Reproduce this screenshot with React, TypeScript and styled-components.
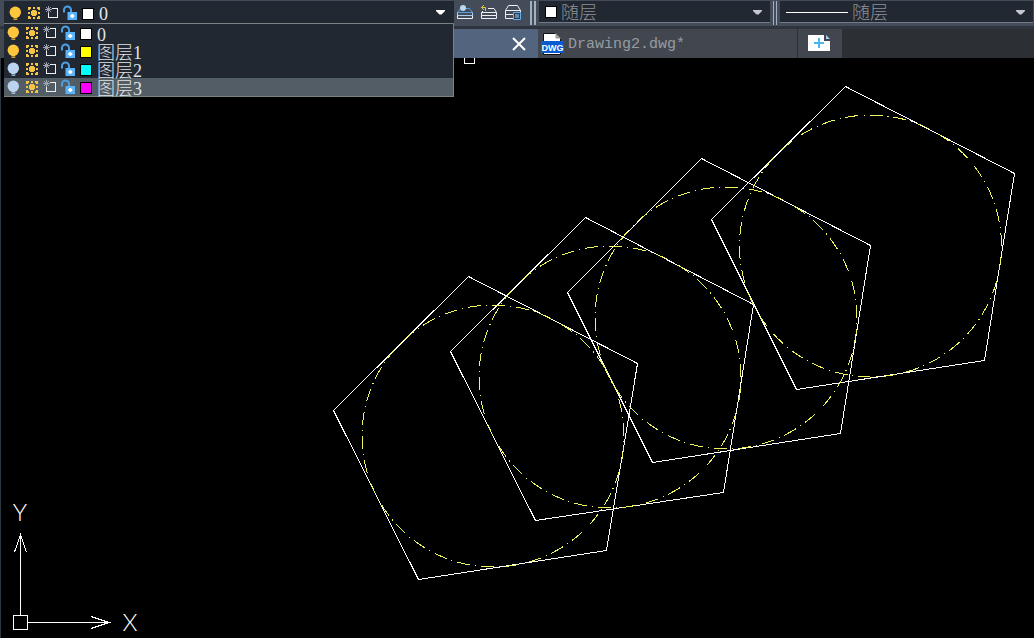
import React, { useState } from "react";
import styled, { createGlobalStyle } from "styled-components";

const GlobalStyle = createGlobalStyle`
  * { box-sizing: border-box; }
  html, body { margin: 0; background: #000; }
  body { font-family: "Liberation Serif", "Noto Sans CJK SC", serif; }
  button, select { font: inherit; color: inherit; border: 0; padding: 0; margin: 0; background: none; }
`;

const Page = styled.div`
  display: flex;
  flex-direction: column;
  min-height: 100vh;
  background: #000;
`;

const Toolbar = styled.header`
  display: flex;
  align-items: flex-start;
  height: 26px;
  padding: 1px 1px 0 4px;
  background: #444c5a;
`;

const LayerBox = styled.div`
  position: relative;
  flex: 0 1 450px;
`;

const LayerCurrent = styled.button`
  display: flex;
  align-items: center;
  width: 100%;
  height: 22px;
  padding: 1px 9px 0 2px;
  background: #212832;
  color: #e6e8ea;
`;

const LayerMenu = styled.ul`
  position: absolute;
  z-index: 2;
  top: 22px;
  left: 0;
  right: 0;
  margin: 0;
  padding: 0;
  list-style: none;
  background: #212832;
  border: 1px solid #7b8284;
  border-left-width: 0;
`;

const LayerRow = styled.li<{ $selected: boolean }>`
  display: flex;
  height: 18px;
  color: #e0e3e6;
  background: ${(p) => (p.$selected ? "#525d65" : "transparent")};
`;

const Cell = styled.span`
  display: flex;
  flex: 0 0 18px;
  height: 18px;
`;

const CellButton = styled.button`
  display: flex;
  flex: 0 0 18px;
  height: 18px;
`;

const Swatch = styled.span<{ $color: string }>`
  flex: 0 0 12px;
  height: 12px;
  margin: 4px 2px 2px 4px;
  border: 1px solid #000;
  background: ${(p) => p.$color};
`;

const LayerName = styled.button`
  flex: 1;
  height: 22px;
  padding-left: 3px;
  text-align: left;
  font-size: 18px;
  font-weight: 300;
  line-height: 22px;
  white-space: nowrap;
`;

const CurrentName = styled.span`
  flex: 1;
  padding: 2px 0 0 3px;
  text-align: left;
  font-size: 18px;
  line-height: 20px;
`;

const Tools = styled.div`
  display: flex;
  gap: 6px;
  padding: 3px 8px 0 2px;
`;

const ToolButton = styled.button`
  display: flex;
  width: 18px;
  height: 18px;
`;

const Grip = styled.div<{ $wide?: boolean }>`
  flex: none;
  width: ${(p) => (p.$wide ? 6 : 4)}px;
  height: 24px;
  margin-right: 3px;
  border: solid #a3b0bf;
  border-width: ${(p) => (p.$wide ? "0 2px" : "0 1px")};
`;

const PropertyBox = styled.label<{ $grow?: boolean }>`
  display: flex;
  align-items: center;
  flex: ${(p) => (p.$grow ? "1 1 250px" : "0 1 231px")};
  min-width: 0;
  height: 22px;
  padding: 1px 8px 0 6px;
  margin-right: ${(p) => (p.$grow ? 0 : 3)}px;
  background: #212832;
  border-bottom: 1px solid #727b88;
  color: #8b9197;
`;

const LineSample = styled.span`
  flex: 0 0 62px;
  height: 1px;
  margin-right: 4px;
  background: #fff;
`;

const ColorSample = styled.span`
  flex: 0 0 12px;
  height: 12px;
  margin-right: 4px;
  border: 1px solid #000;
  background: #fff;
`;

const Select = styled.select`
  appearance: none;
  flex: 1;
  min-width: 0;
  height: 20px;
  padding-top: 2px;
  font-size: 18px;
  font-weight: 300;
  line-height: 18px;
  outline: none;
`;

const TabStrip = styled.nav`
  display: flex;
  height: 32px;
  border-top: 3px solid #2f353f;
  background: #2c3034;
`;

const TabSpace = styled.div`
  flex: 0 1 230px;
  background: #414850;
`;

const Tab = styled.div<{ $active?: boolean }>`
  display: flex;
  align-items: center;
  flex: 0 1 ${(p) => (p.$active ? 308 : 260)}px;
  justify-content: ${(p) => (p.$active ? "flex-end" : "flex-start")};
  padding: ${(p) => (p.$active ? "0 12px 0 0" : "0 0 0 3px")};
  background: ${(p) => (p.$active ? "#52647e" : "#42474f")};
  border-right: ${(p) => (p.$active ? "0" : "1px solid #2c3036")};
`;

const TabButton = styled.button`
  display: flex;
  align-items: center;
  gap: 3px;
  color: #979ca2;
  font-family: "Liberation Mono", monospace;
  font-size: 15px;
  line-height: 20px;
`;

const TabTitle = styled.span`
  padding-top: 2px;
`;

const NewTab = styled.button`
  display: flex;
  align-items: center;
  justify-content: center;
  flex: 0 0 44px;
  padding: 0 2px 2px 0;
  background: #42474f;
`;

const Canvas = styled.main`
  position: relative;
  flex: 1;
  border-left: 1px solid #2d373f;
  background: #000;
`;

const Drawing = styled.svg`
  display: block;
  width: 100%;
  height: auto;
`;

const Ucs = styled.svg`
  position: absolute;
  left: 0;
  bottom: 0;
`;

const Bulb = ({ on }: { on: boolean }) => (
  <svg width="18" height="18" viewBox="0 0 18 18" aria-hidden="true">
    <g fill={on ? "#fdc63c" : "#bcd4f0"}>
      <circle cx="9.3" cy="8.2" r="5.7" />
      <path d="M6.6 11h5.4l-1 3H7.6zM7.5 14.6h3.800v1.200H7.500z" />
    </g>
  </svg>
);

const Sun = () => (
  <svg width="18" height="18" viewBox="0 0 18 18" aria-hidden="true" shapeRendering="crispEdges">
    <path
      fill="#f6c445"
      d="M8 6h4v1h1v4h-1v1H8v-1H7V7h1zM9 3h2v2H9zM9 13h2v2H9zM4 8h2v2H4zM14 8h2v2h-2zM4 3h3v2H6v1H4zM13 3h3v3h-2V5h-1zM4 12h2v1h1v2H4zM14 12h2v3h-3v-2h1z"
    />
  </svg>
);

const Viewport = () => (
  <svg width="18" height="18" viewBox="0 0 18 18" aria-hidden="true" shapeRendering="crispEdges">
    <path d="M10 4.500h5.500v9h-9V9" fill="none" stroke="#eef0f2" />
    <path d="M6.500 2v7M3 5.500h7M4 3l5 5M9 3L4 8" fill="none" stroke="#9aa2ab" />
  </svg>
);

const Lock = () => (
  <svg width="18" height="18" viewBox="0 0 18 18" aria-hidden="true">
    <path d="M4 8.500V6a3.500 3.500 0 0 1 7 0V9" fill="none" stroke="#4d9fe0" strokeWidth="2" />
    <path d="M7.500 8H17v8H7.500z" fill="#5ab2f8" />
    <path d="M12.300 10v4M10.300 12h4" stroke="#fff" strokeWidth="2" />
  </svg>
);

const Stack = ({ kind }: { kind: "current" | "previous" | "states" }) => (
  <svg width="18" height="18" viewBox="0 0 18 18" aria-hidden="true">
    <g fill="none" stroke="#eef1f4" strokeWidth="1">
      {kind === "current" && (
        <>
          <path d="M1.500 8.500l3-4h9l3 4z" stroke="#5b9edb" />
          <path d="M1.500 8.500v3h15v-3" stroke="#a9cdf0" />
          <path d="M1.500 11.500v3h15v-3" />
          <circle cx="7" cy="4" r="3" fill="#bcd8f2" stroke="none" />
        </>
      )}
      {kind === "previous" && (
        <>
          <path d="M8 4.500h6l2.500 4h-15L3 7M1.500 8.500v3h15v-3M1.500 11.500v3h15v-3" />
          <path d="M5.500 7V3.500H1.500M4 1L1.500 3.500 4 6" stroke="#e3c83f" />
        </>
      )}
      {kind === "states" && (
        <>
          <path d="M1.500 6.500l3-5h9l3 5zM1.500 6.500v4h8M16.500 6.500v2M1.500 10.500v4h8" />
          <path d="M9.500 8.500h7v7h-7z" fill="#2f3d50" stroke="#5db0f2" />
          <path d="M11 11h4M11 13h4" stroke="#9ed0f8" />
        </>
      )}
    </g>
  </svg>
);

const Chevron = ({ color }: { color: string }) => (
  <svg width="9" height="5" viewBox="0 0 9 5" aria-hidden="true">
    <path d="M0 0h9v1L5.500 4.500h-2L0 1z" fill={color} />
  </svg>
);

const DwgIcon = () => (
  <svg width="24" height="24" viewBox="0 0 24 24" aria-hidden="true">
    <path d="M2.500 1.500h12l5 5v16h-17z" fill="#fff" stroke="#111" />
    <path d="M14.500 1v5.500H20z" fill="#9c9c9c" />
    <path d="M0 9h23v12H0z" fill="#0a5ad2" />
    <text x="11.500" y="19" textAnchor="middle" fill="#fff" fontFamily="Liberation Sans, sans-serif" fontSize="9" fontWeight="700">
      DWG
    </text>
  </svg>
);

const layers = [
  { name: "0", color: "#ffffff", on: true },
  { name: "图层1", color: "#ffff00", on: true },
  { name: "图层2", color: "#00ffff", on: false },
  { name: "图层3", color: "#ff00ff", on: false },
];

const pentagons = [
  "468.5,276.5 637.5,363.5 606.5,550.5 418.5,579.5 333.5,410.5",
  "585.5,217.5 753.5,304.5 723.5,492.5 535.5,520.5 450.5,351.5",
  "701.5,158.5 870.5,245.5 840.5,433.5 652.5,462.5 567.5,292.5",
  "845.5,86.5 1014.5,173.5 984.5,360.5 796.5,389.5 711.5,219.5",
];

const centers = [
  [493, 436],
  [610, 377],
  [726, 318],
  [870.5, 246],
];

export default function App() {
  const [open, setOpen] = useState(true);
  const [current, setCurrent] = useState(0);
  const [hovered, setHovered] = useState(3);

  return (
    <Page>
      <GlobalStyle />
      <Toolbar>
        <LayerBox>
          <LayerCurrent aria-label="图层" aria-expanded={open} onClick={() => setOpen(!open)}>
            <Cell><Bulb on={layers[current].on} /></Cell>
            <Cell><Sun /></Cell>
            <Cell><Viewport /></Cell>
            <Cell><Lock /></Cell>
            <Swatch $color={layers[current].color} />
            <CurrentName>{layers[current].name}</CurrentName>
            <Chevron color="#fff" />
          </LayerCurrent>
          {open && (
            <LayerMenu>
              {layers.map((layer, i) => (
                <LayerRow key={layer.name} $selected={i === hovered} onMouseEnter={() => setHovered(i)}>
                  <CellButton aria-label="开/关"><Bulb on={layer.on} /></CellButton>
                  <CellButton aria-label="冻结"><Sun /></CellButton>
                  <CellButton aria-label="视口冻结"><Viewport /></CellButton>
                  <CellButton aria-label="锁定"><Lock /></CellButton>
                  <Swatch $color={layer.color} />
                  <LayerName
                    onClick={() => {
                      setCurrent(i);
                      setOpen(false);
                    }}
                  >
                    {layer.name}
                  </LayerName>
                </LayerRow>
              ))}
            </LayerMenu>
          )}
        </LayerBox>
        <Tools>
          <ToolButton aria-label="置为当前"><Stack kind="current" /></ToolButton>
          <ToolButton aria-label="上一个图层"><Stack kind="previous" /></ToolButton>
          <ToolButton aria-label="图层状态"><Stack kind="states" /></ToolButton>
        </Tools>
        <Grip $wide />
        <PropertyBox>
          <ColorSample />
          <Select aria-label="颜色"><option>随层</option></Select>
          <Chevron color="#c3c8ce" />
        </PropertyBox>
        <Grip />
        <PropertyBox $grow>
          <LineSample />
          <Select aria-label="线型"><option>随层</option></Select>
          <Chevron color="#c3c8ce" />
        </PropertyBox>
      </Toolbar>

      <TabStrip>
        <TabSpace />
        <Tab $active>
          <TabButton aria-label="关闭">
            <svg width="14" height="14" viewBox="0 0 14 14" aria-hidden="true">
              <path d="M1 1l12 12M13 1L1 13" stroke="#fff" strokeWidth="2" />
            </svg>
          </TabButton>
        </Tab>
        <Tab>
          <TabButton>
            <DwgIcon />
            <TabTitle>Drawing2.dwg*</TabTitle>
          </TabButton>
        </Tab>
        <NewTab aria-label="新建">
          <svg width="22" height="16" viewBox="0 0 22 16" aria-hidden="true">
            <path d="M0 0h16v6h6v10H0z" fill="#fff" />
            <path d="M18 0l4 4h-4z" fill="#a9cdf0" />
            <path d="M11 3v10M6 8h10" stroke="#4db5ee" strokeWidth="2" />
          </svg>
        </NewTab>
      </TabStrip>

      <Canvas>
        <Drawing viewBox="1 58 1033 580" role="img" aria-label="Drawing2" shapeRendering="crispEdges">
          <g fill="none" strokeWidth="1">
            <path d="M464.500 58v5.500h10V58" stroke="#fff" />
            {pentagons.map((points) => (
              <polygon key={points} points={points} stroke="#fff" />
            ))}
            {centers.map(([cx, cy]) => (
              <circle
                key={cx}
                cx={cx}
                cy={cy}
                r="131"
                stroke="#f0f55c"
                pathLength={816}
                strokeDasharray="13 5 1 5"
                strokeDashoffset={-11}
              />
            ))}
          </g>
        </Drawing>
        <Ucs width="150" height="140" viewBox="1 498 150 140" role="img" aria-label="UCS">
          <g fill="none" stroke="#fff" shapeRendering="crispEdges">
            <path d="M13.500 615.500h14v14h-14zM20.500 615V534M28 622.500h81M14.500 552l6-17 6 17M91 616.500l18 6-18 6" />
          </g>
          <g fill="#fff" fontFamily="Lato, sans-serif" fontWeight="300" textAnchor="middle">
            <text x="20" y="521" fontSize="24">Y</text>
            <text x="130" y="631" fontSize="24">X</text>
          </g>
        </Ucs>
      </Canvas>
    </Page>
  );
}
